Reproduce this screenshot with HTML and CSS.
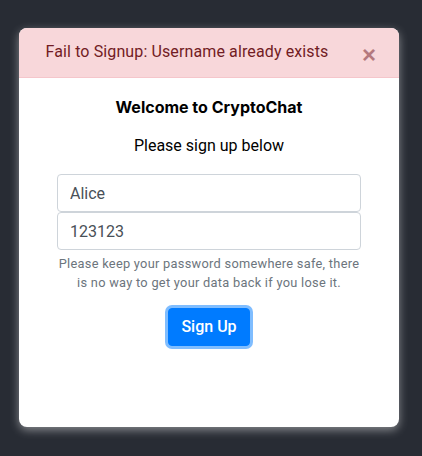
FILE: index.html
```html
<!DOCTYPE html>
<html lang="en">
<head>
<meta charset="utf-8">
<title>CryptoChat</title>
<link rel="stylesheet" href="styles.css">
</head>
<body>
<div class="modal">
  <div class="alert" role="alert">
    <span class="alert-text">Fail to Signup: Username already exists</span>
    <button class="close" type="button" aria-label="Close">&times;</button>
  </div>
  <div class="modal-body">
    <h5 class="title">Welcome to CryptoChat</h5>
    <p class="subtitle">Please sign up below</p>
    <form class="form">
      <input class="input" type="text" value="Alice">
      <input class="input" type="text" value="123123">
      <small class="hint">Please keep your password somewhere safe, there is no way to get your data back if you lose it.</small>
      <button class="btn" type="button">Sign Up</button>
    </form>
  </div>
</div>
</body>
</html>
```
FILE: styles.css
```css
html, body {
  margin: 0;
  padding: 0;
}
body {
  background: #282c34;
  height: 456px;
  overflow: hidden;
  font-family: Roboto, "Liberation Sans", sans-serif;
  font-size: 16px;
  line-height: 1.5;
  color: #212529;
}
.modal {
  margin: 28px 0 0 19px;
  width: 380px;
  height: 399px;
  background: #fff;
  border-radius: 8px;
  box-shadow: 0 3px 10px rgba(255, 255, 255, 0.45);
  overflow: hidden;
  display: flex;
  flex-direction: column;
}
.alert {
  position: relative;
  background: #f8d7da;
  color: #721c24;
  border-bottom: 1px solid #f5c6cb;
  padding: 12px 64px 13px 20px;
  text-align: center;
  font-size: 16px;
  line-height: 24px;
  letter-spacing: 0.12px;
  white-space: nowrap;
}
.close {
  position: absolute;
  top: 3px;
  right: 3px;
  padding: 12px 20px;
  border: 0;
  background: transparent;
  color: #721c24;
  opacity: 0.5;
  font-family: "Liberation Sans", sans-serif;
  font-size: 24px;
  font-weight: 700;
  line-height: 24px;
}
.modal-body {
  display: flex;
  flex-direction: column;
  align-items: center;
  padding-top: 17px;
}
.title {
  margin: 0;
  font-family: Inter, Roboto, sans-serif;
  font-size: 16px;
  font-weight: 700;
  line-height: 24px;
  color: #000;
}
.subtitle {
  margin: 15px 0 0;
  font-size: 16px;
  line-height: 24px;
  color: #000;
}
.form {
  width: 304px;
  margin-top: 16px;
  display: flex;
  flex-direction: column;
  align-items: center;
}
.input {
  box-sizing: border-box;
  width: 100%;
  height: 38px;
  padding: 6px 12px;
  border: 1px solid #ced4da;
  border-radius: 4px;
  font-family: inherit;
  font-size: 16px;
  color: #495057;
  background: #fff;
}
.hint {
  margin-top: 4px;
  font-size: 12.8px;
  line-height: 19.2px;
  letter-spacing: 0.28px;
  color: #6c757d;
  text-align: center;
}
.btn {
  margin-top: 16px;
  height: 38px;
  padding: 6px 12px;
  border: 1px solid #007bff;
  border-radius: 4px;
  background: #007bff;
  color: #fff;
  font-family: inherit;
  font-size: 16px;
  font-weight: 500;
  line-height: 24px;
  box-shadow: 0 0 0 3px rgba(0, 123, 255, 0.5);
}
```
